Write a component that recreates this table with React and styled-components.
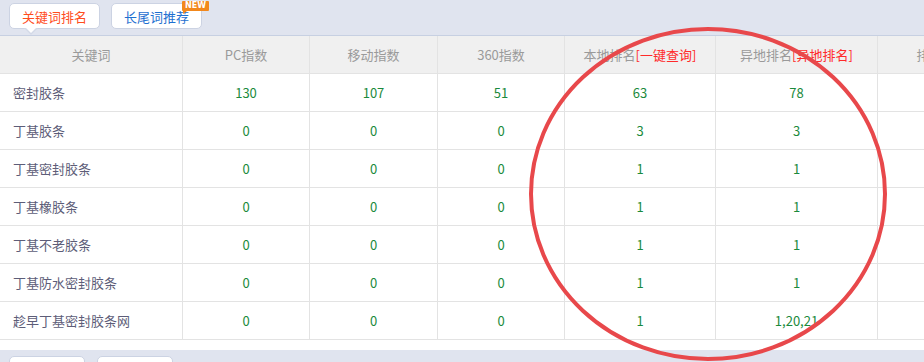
import React from "react";
import styled, { createGlobalStyle } from "styled-components";

const GlobalStyle = createGlobalStyle`
  html, body {
    margin: 0;
    padding: 0;
    background: #ffffff;
    font-family: "Noto Sans CJK SC", "Noto Sans", sans-serif;
    overflow: hidden;
  }
`;

const Page = styled.div`
  position: relative;
  width: 924px;
  height: 362px;
  overflow: hidden;
  background: #fff;
`;

const TopBar = styled.div`
  height: 36px;
  background: #e0e4ef;
  display: flex;
  align-items: flex-start;
  gap: 11px;
  padding: 3px 0 0 9px;
  box-sizing: border-box;
  border-bottom: 1px solid #c7d0e2;
`;

const Tab = styled.div`
  position: relative;
  width: 91px;
  height: 26px;
  box-sizing: border-box;
  background: #fff;
  border: 1px solid #ccd3e3;
  border-radius: 5px;
  display: flex;
  align-items: center;
  justify-content: center;
  font-size: 13px;
  color: ${(p) => (p.$active ? "#ff4d1c" : "#1e6fd0")};

  ${(p) =>
    p.$active &&
    `
    &::before {
      content: "";
      position: absolute;
      left: 14px;
      bottom: -7px;
      border-left: 7px solid transparent;
      border-right: 7px solid transparent;
      border-top: 7px solid #d3d9e7;
    }
    &::after {
      content: "";
      position: absolute;
      left: 15px;
      bottom: -5px;
      border-left: 6px solid transparent;
      border-right: 6px solid transparent;
      border-top: 6px solid #fff;
    }
  `}
`;

const Badge = styled.span`
  position: absolute;
  top: -3px;
  right: -8px;
  height: 10px;
  padding: 0 3px;
  background: #f2881d;
  color: #fff;
  font-family: "DejaVu Sans", sans-serif;
  font-weight: bold;
  font-size: 8px;
  line-height: 10px;
  border-radius: 1px;

  &::after {
    content: "";
    position: absolute;
    left: 1px;
    bottom: -3px;
    border-right: 4px solid transparent;
    border-top: 3px solid #f2881d;
  }
`;

const Table = styled.div`
  display: grid;
  grid-template-columns: 183px 127px 128px 127px 151px 162px 130px;
`;

const HeadCell = styled.div`
  height: 38px;
  box-sizing: border-box;
  background: #f0f0f0;
  border-right: 1px solid #e3e3e3;
  border-bottom: 1px solid #e3e3e3;
  display: flex;
  align-items: center;
  justify-content: center;
  font-size: 13px;
  color: #9a9a9a;
  white-space: nowrap;
`;

const Link = styled.span`
  color: #ff2a2a;
`;

const Cell = styled.div`
  height: 38px;
  box-sizing: border-box;
  border-right: 1px solid #e3e3e3;
  border-bottom: 1px solid #e3e3e3;
  display: flex;
  align-items: center;
  justify-content: ${(p) => (p.$left ? "flex-start" : "center")};
  padding-left: ${(p) => (p.$left ? "13px" : "0")};
  font-size: 13px;
  color: ${(p) => (p.$left ? "#5d5d78" : "#1b8a3c")};
  white-space: nowrap;
`;

const Spacer = styled.div`
  height: 10px;
`;

const BottomBar = styled.div`
  height: 20px;
  background: #e0e4ef;
  display: flex;
  gap: 12px;
  padding: 6px 0 0 9px;
  box-sizing: border-box;
`;

const SmallButton = styled.div`
  width: ${(p) => p.$w}px;
  height: 26px;
  background: #fff;
  border: 1px solid #ccd3e3;
  border-radius: 5px;
  box-sizing: border-box;
`;

const Annotation = styled.svg`
  position: absolute;
  left: 0;
  top: 0;
  pointer-events: none;
`;

const rows = [
  ["密封胶条", "130", "107", "51", "63", "78"],
  ["丁基胶条", "0", "0", "0", "3", "3"],
  ["丁基密封胶条", "0", "0", "0", "1", "1"],
  ["丁基橡胶条", "0", "0", "0", "1", "1"],
  ["丁基不老胶条", "0", "0", "0", "1", "1"],
  ["丁基防水密封胶条", "0", "0", "0", "1", "1"],
  ["趁早丁基密封胶条网", "0", "0", "0", "1", "1,20,21"],
];

export default function App() {
  return (
    <Page>
      <GlobalStyle />
      <TopBar>
        <Tab $active>关键词排名</Tab>
        <Tab>
          长尾词推荐
          <Badge>NEW</Badge>
        </Tab>
      </TopBar>
      <Table>
        <HeadCell>关键词</HeadCell>
        <HeadCell>PC指数</HeadCell>
        <HeadCell>移动指数</HeadCell>
        <HeadCell>360指数</HeadCell>
        <HeadCell>
          本地排名<Link>[一键查询]</Link>
        </HeadCell>
        <HeadCell>
          异地排名<Link>[异地排名]</Link>
        </HeadCell>
        <HeadCell>排名趋势</HeadCell>
        {rows.map((r, i) => (
          <React.Fragment key={i}>
            <Cell $left>{r[0]}</Cell>
            {r.slice(1).map((v, j) => (
              <Cell key={j}>{v}</Cell>
            ))}
            <Cell />
          </React.Fragment>
        ))}
      </Table>
      <Spacer />
      <BottomBar>
        <SmallButton $w={76} />
        <SmallButton $w={76} />
      </BottomBar>
      <Annotation width="924" height="362">
        <ellipse
          cx="708"
          cy="194"
          rx="177"
          ry="165"
          fill="none"
          stroke="#e8484b"
          strokeWidth="4"
        />
      </Annotation>
    </Page>
  );
}
